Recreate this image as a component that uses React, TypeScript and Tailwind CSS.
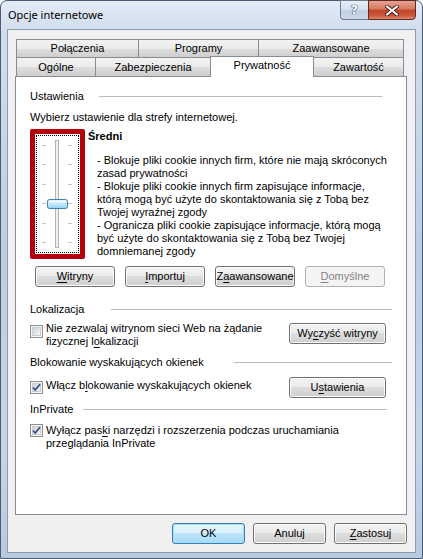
import React from 'react';

const ui = "font-['Liberation_Sans',Arial,sans-serif] text-[11px] leading-[13px] text-black";

// Win7 style push button
function Button({
  children,
  width,
  primary = false,
  disabled = false,
}: {
  children: React.ReactNode;
  width: string;
  primary?: boolean;
  disabled?: boolean;
}) {
  const look = disabled
    ? 'border-[#adb2b5] bg-[#f4f4f4] text-[#838383]'
    : primary
      ? 'border-[#3c7fb1] bg-[linear-gradient(180deg,#eaf6fd_0%,#d9f0fc_50%,#bee6fd_50%,#a7d9f5_100%)] shadow-[inset_0_0_0_1px_#9fe0fb]'
      : 'border-[#707070] bg-[linear-gradient(180deg,#f2f2f2_0%,#ebebeb_50%,#dddddd_50%,#cfcfcf_100%)] shadow-[inset_0_0_0_1px_#fcfcfc]';
  return (
    <div className={`${width} h-[21px] shrink-0 flex items-center justify-center rounded-[3px] border ${look}`}>
      <span>{children}</span>
    </div>
  );
}

// Underlined access key
function K({ children }: { children: React.ReactNode }) {
  return <span className="underline underline-offset-[2px]">{children}</span>;
}

function Checkbox({ checked = false }: { checked?: boolean }) {
  return (
    <svg width="13" height="13" viewBox="0 0 13 13" className="shrink-0">
      <defs>
        <linearGradient id={checked ? 'cbOn' : 'cbOff'} x1="0" y1="0" x2="1" y2="1">
          <stop offset="0" stopColor="#cbcfd5" />
          <stop offset="1" stopColor="#f6f6f6" />
        </linearGradient>
      </defs>
      <rect x="0.5" y="0.5" width="12" height="12" fill="#f4f4f4" stroke="#8e8f8f" />
      <rect x="2.5" y="2.5" width="8" height="8" fill={`url(#${checked ? 'cbOn' : 'cbOff'})`} stroke="#c9ccd1" />
      {checked && (
        <path d="M3 6.5 L5.2 9 L10 3.2" fill="none" stroke="#3b4f86" strokeWidth="1.8" strokeLinejoin="round" />
      )}
    </svg>
  );
}

// Section heading with a rule running to the right
function Heading({ label, gap, right }: { label: string; gap: string; right: string }) {
  return (
    <div className={`flex items-center ${right}`}>
      <span className="whitespace-nowrap">{label}</span>
      <div className={`flex-1 h-px bg-[#bdbdbd] ${gap}`} />
    </div>
  );
}

function Tab({ label, width, active = false }: { label: string; width: string; active?: boolean }) {
  if (active) {
    return (
      <div className={`${width} h-[21px] -ml-px -mb-px relative z-10 flex items-start justify-center pt-[2px] border border-b-0 border-[#898c95] bg-white`}>
        {label}
      </div>
    );
  }
  return (
    <div className={`${width} h-full -ml-px first:ml-0 flex items-center justify-center border border-b-0 border-[#898c95] bg-[linear-gradient(180deg,#f2f2f2_0%,#ebebeb_50%,#dddddd_51%,#cfcfcf_100%)]`}>
      {label}
    </div>
  );
}

function PrivacySlider() {
  const ticks = [9, 28, 48, 67, 87, 106];
  return (
    <div className="w-[55px] h-[130px] shrink-0 border-[5px] border-[#b3000c] rounded-[2px] p-px bg-white">
      <div className="w-full h-full border border-dotted border-black">
        <svg width="41" height="116" viewBox="0 0 41 116">
          <defs>
            <linearGradient id="thumb" x1="0" y1="0" x2="0" y2="1">
              <stop offset="0" stopColor="#e9f7fe" />
              <stop offset="0.5" stopColor="#c4e9fb" />
              <stop offset="1" stopColor="#8fd0f1" />
            </linearGradient>
          </defs>
          {ticks.map((y) => (
            <g key={y}>
              <line x1="5" x2="9" y1={y + 0.5} y2={y + 0.5} stroke="#c4c4c4" />
              <line x1="31" x2="35" y1={y + 0.5} y2={y + 0.5} stroke="#c4c4c4" />
            </g>
          ))}
          <rect x="18.5" y="4.5" width="3" height="107" fill="#f0f0f0" stroke="#b4b4b4" />
          <rect x="10.5" y="63.5" width="20" height="9" rx="2" fill="url(#thumb)" stroke="#3c7fb1" />
          <line x1="12" x2="29" y1="65.5" y2="65.5" stroke="#ffffff" strokeOpacity="0.8" />
        </svg>
      </div>
    </div>
  );
}

export default function App() {
  return (
    <div className={`w-[423px] h-[559px] flex flex-col rounded-t-[7px] border border-[#4a5c74] bg-[linear-gradient(180deg,#e3ebf6_0%,#d2deee_5%,#bccde2_45%,#c6d6e9_80%,#b8c9de_100%)] ${ui}`}>
      {/* Title bar */}
      <div className="h-[28px] flex items-start shrink-0">
        <span className="ml-[7px] mt-[6px] font-['Noto_Sans',sans-serif] text-[11px] leading-[16px]">
          Opcje internetowe
        </span>
        <div className="ml-auto mr-[6px] -mt-px flex">
          <div className="w-[28px] h-[20px] flex items-center justify-center rounded-bl-[4px] border border-r-0 border-[#6d7c8f] bg-[linear-gradient(180deg,#e6eef8_0%,#d4e0ee_50%,#c1d0e2_51%,#cbd9ea_100%)]">
            <span className="font-['DejaVu_Sans',sans-serif] font-bold text-[12px] leading-none text-white [text-shadow:0_0_1px_#394a60,0_0_1px_#394a60,0_0_1px_#394a60]">?</span>
          </div>
          <div className="w-[48px] h-[20px] flex items-center justify-center rounded-br-[4px] border border-[#5c2b25] bg-[linear-gradient(180deg,#e8a493_0%,#d7775f_45%,#c1442b_50%,#c9553a_80%,#e0876a_100%)]">
            <svg width="14" height="11" viewBox="0 0 14 11">
              <path d="M2 1.5 L12 9.5 M12 1.5 L2 9.5" stroke="#4b1f19" strokeWidth="4" strokeLinecap="round" />
              <path d="M2 1.5 L12 9.5 M12 1.5 L2 9.5" stroke="#ffffff" strokeWidth="2.2" strokeLinecap="round" />
            </svg>
          </div>
        </div>
      </div>

      {/* Client area */}
      <div className="flex-1 mx-[6px] mb-[5px] flex flex-col border border-[#8d9db1] bg-[#f0f0f0] pt-[9px] pl-[7px] pr-[8px]">
        {/* Tabs */}
        <div className="flex h-[18px] ml-px">
          <Tab label="Połączenia" width="w-[123px]" />
          <Tab label="Programy" width="w-[121px]" />
          <Tab label="Zaawansowane" width="w-[146px]" />
        </div>
        <div className="flex h-[19px] items-end ml-px">
          <Tab label="Ogólne" width="w-[80px]" />
          <Tab label="Zabezpieczenia" width="w-[116px]" />
          <Tab label="Prywatność" width="w-[104px]" active />
          <Tab label="Zawartość" width="w-[91px]" />
        </div>

        {/* Privacy page */}
        <div className="h-[439px] border border-[#898c95] bg-white pl-[14px] pt-[13px] flex flex-col">
          <Heading label="Ustawienia" gap="ml-[15px]" right="mr-[24px]" />
          <div className="mt-[8px]">Wybierz ustawienie dla strefy internetowej.</div>

          <div className="mt-[5px] flex">
            <PrivacySlider />
            <div className="ml-[3px] pt-[1px] whitespace-nowrap">
              <div className="font-bold">Średni</div>
              <div className="ml-[9px] mt-[11px]">
                <div>- Blokuje pliki cookie innych firm, które nie mają skróconych</div>
                <div>zasad prywatności</div>
                <div>- Blokuje pliki cookie innych firm zapisujące informacje,</div>
                <div>którą mogą być użyte do skontaktowania się z Tobą bez</div>
                <div>Twojej wyraźnej zgody</div>
                <div>- Ogranicza pliki cookie zapisujące informacje, którą mogą</div>
                <div>być użyte do skontaktowania się z Tobą bez Twojej</div>
                <div>domniemanej zgody</div>
              </div>
            </div>
          </div>

          <div className="mt-[7px] ml-[5px] flex gap-[10px]">
            <Button width="w-[80px]"><K>W</K>itryny</Button>
            <Button width="w-[80px]"><K>I</K>mportuj</Button>
            <Button width="w-[80px]">Z<K>a</K>awansowane</Button>
            <Button width="w-[80px]" disabled><K>D</K>omyślne</Button>
          </div>

          <div className="mt-[16px]">
            <Heading label="Lokalizacja" gap="ml-[27px]" right="mr-[14px]" />
          </div>
          <div className="mt-[6px] flex items-start">
            <div className="mt-[3px]"><Checkbox /></div>
            <div className="ml-[3px] w-[243px]">
              <div>Nie zezwalaj witrynom sieci Web na żądanie</div>
              <div>fizycznej l<K>o</K>kalizacji</div>
            </div>
            <div className="mt-px">
              <Button width="w-[97px]">Wy<K>c</K>zyść witryny</Button>
            </div>
          </div>

          <div className="mt-[8px]">
            <Heading label="Blokowanie wyskakujących okienek" gap="ml-[30px]" right="mr-[14px]" />
          </div>
          <div className="mt-[8px] flex items-start">
            <div className="mt-[4px]"><Checkbox checked /></div>
            <div className="ml-[3px] mt-[2px] w-[243px]">
              Włącz b<K>l</K>okowanie wyskakujących okienek
            </div>
            <Button width="w-[97px]">U<K>s</K>tawienia</Button>
          </div>

          <div className="mt-[5px]">
            <Heading label="InPrivate" gap="ml-[10px]" right="mr-[19px]" />
          </div>
          <div className="mt-[8px] flex items-start">
            <div className="mt-0"><Checkbox checked /></div>
            <div className="ml-[3px]">
              <div>Wyłącz pas<K>k</K>i narzędzi i rozszerzenia podczas uruchamiania</div>
              <div>przeglądania InPrivate</div>
            </div>
          </div>
        </div>

        {/* Dialog buttons */}
        <div className="mt-[8px] flex justify-end gap-[8px]">
          <Button width="w-[73px]" primary>OK</Button>
          <Button width="w-[73px]">Anuluj</Button>
          <Button width="w-[73px]"><K>Z</K>astosuj</Button>
        </div>
      </div>
    </div>
  );
}
